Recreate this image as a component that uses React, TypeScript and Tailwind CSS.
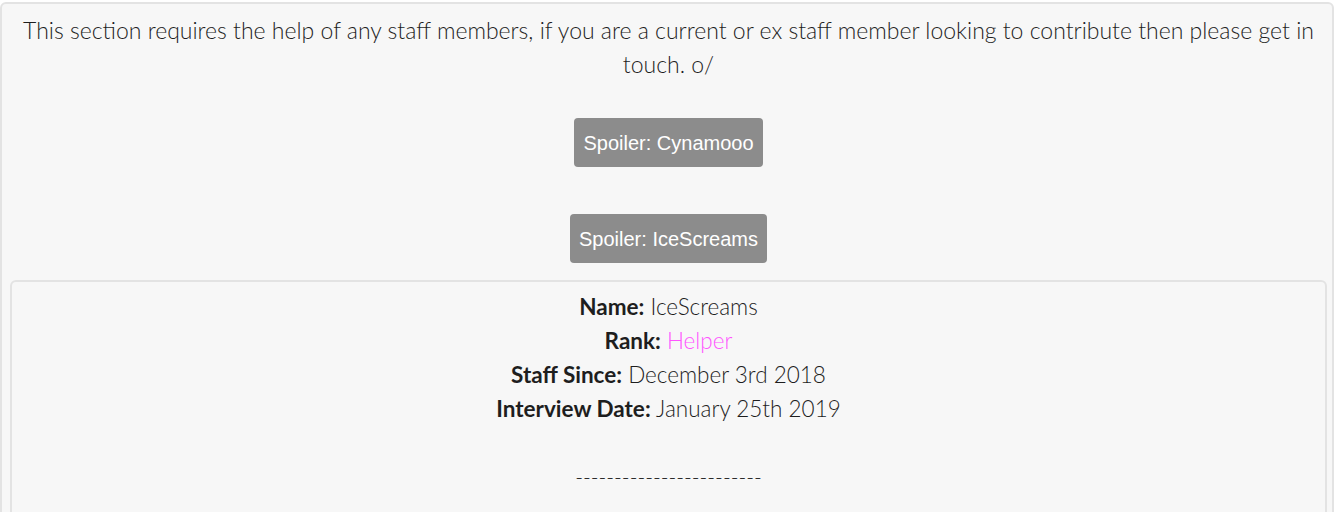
import React from 'react';

const body = { fontFamily: 'Lato, "Open Sans", sans-serif' };
const btn = { fontFamily: '"Liberation Sans", Arial, sans-serif' };

function Spoiler({ label }: { label: string }) {
  return (
    <button
      className="rounded-[4px] bg-[#8c8c8c] px-[9px] h-[49px] text-[20px] text-white"
      style={btn}
    >
      {label}
    </button>
  );
}

function Row({ label, children }: { label: string; children: React.ReactNode }) {
  return (
    <div>
      <span className="font-bold">{label}:</span> {children}
    </div>
  );
}

export default function App() {
  return (
    <div className="w-[1334px] h-[512px] overflow-hidden bg-white pt-[2px]">
      <div
        className="h-[600px] rounded-[6px] border-2 border-[#e3e3e3] bg-[#f7f7f7] pl-[8px] pr-[5px] text-center text-[22.5px] font-light leading-[34px] text-[#1e1e1e]"
        style={body}
      >
        <p className="px-[8px] pt-[9px] text-[23px]">
          This section requires the help of any staff members, if you are a current or ex staff member looking to
          contribute then please get in touch. o/
        </p>
        <div className="mt-[37px] flex justify-center">
          <Spoiler label="Spoiler: Cynamooo" />
        </div>
        <div className="mt-[47px] flex justify-center">
          <Spoiler label="Spoiler: IceScreams" />
        </div>
        <div className="mt-[17px] rounded-[6px] border-2 border-[#e3e3e3] pt-[8px]">
          <Row label="Name">IceScreams</Row>
          <Row label="Rank">
            <span className="text-[#ff55ff]">Helper</span>
          </Row>
          <Row label="Staff Since">December 3rd 2018</Row>
          <Row label="Interview Date">January 25th 2019</Row>
          <div className="h-[34px]" />
          <div className="text-[21px]">------------------------</div>
          <div className="h-[100px]" />
        </div>
      </div>
    </div>
  );
}
